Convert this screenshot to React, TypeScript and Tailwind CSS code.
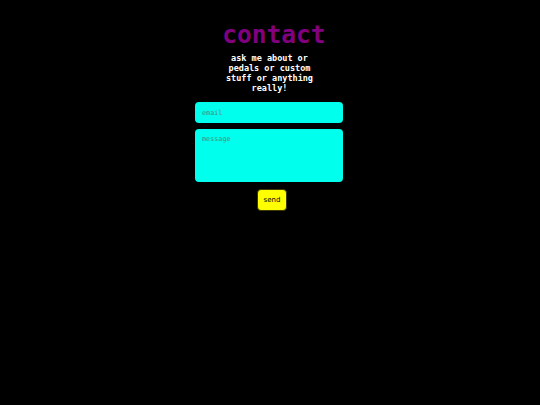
export default function App() {
  return (
    <div className="min-h-[405px] w-full bg-black flex flex-col items-center pt-[18px]">
      <div className="flex flex-col items-center ml-[-1px]">
        <h1 className="text-[#800080] font-bold text-[24.5px] leading-[34px] ml-[9px] font-['DejaVu_Sans_Mono',monospace]">contact</h1>
        <p className="mt-[1px] w-[100px] text-center text-white font-bold text-[8.5px] leading-[10px] font-['DejaVu_Sans_Mono',monospace]">
          ask me about or pedals or custom stuff or anything really!
        </p>
      </div>
      <form className="mt-[9px] flex flex-col items-center gap-[6px]" onSubmit={(e) => e.preventDefault()}>
        <input
          type="text"
          placeholder="email"
          className="w-[148px] h-[21px] rounded-[4px] bg-[#00ffec] px-[7px] text-[6.8px] font-['DejaVu_Sans_Mono',monospace] placeholder:text-[#4f8a84] outline-none ml-[-2px]"
        />
        <textarea
          placeholder="message"
          className="w-[148px] h-[53px] rounded-[4px] bg-[#00ffec] px-[7px] pt-[5px] text-[6.8px] font-['DejaVu_Sans_Mono',monospace] placeholder:text-[#4f8a84] outline-none resize-none ml-[-2px]"
        />
        <button
          type="submit"
          className="mt-[1px] w-[30px] h-[22px] ml-[4px] rounded-[4px] bg-[#ffff00] border border-[#3a3a00] text-[7px] text-black font-['DejaVu_Sans',sans-serif]"
        >
          send
        </button>
      </form>
    </div>
  );
}
